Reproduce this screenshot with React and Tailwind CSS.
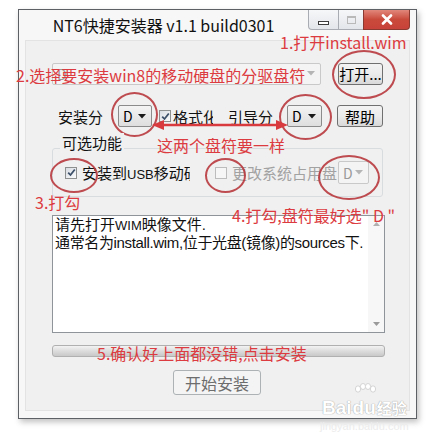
import React from "react";

const Arrow = ({ disabled }) => (
  <svg width="8" height="5" viewBox="0 0 8 5">
    <path d="M0 0 L8 0 L4 4.5 Z" fill={disabled ? "#b5b5b5" : "#1a1a1a"} />
  </svg>
);

const Combo = ({ w, disabled, h = "h-[22px]" }) => (
  <div
    className={`${w} ${h} flex items-center justify-between pl-[4px] pr-[5px] rounded-[2px] border ${
      disabled
        ? "border-[#c9c9c9] bg-[#f4f4f4] text-[#9a9a9a]"
        : "border-[#8b8b8b] bg-linear-to-b from-[#f4f4f4] to-[#dedede] text-black"
    } text-[14px] leading-none`}
  >
    <span>D</span>
    <Arrow disabled={disabled} />
  </div>
);

const Check = ({ checked, disabled }) => (
  <span
    className={`w-[12px] h-[12px] shrink-0 flex items-center justify-center border ${
      disabled ? "border-[#bcbcbc] bg-[#f6f6f6]" : "border-[#8e8f8f] bg-linear-to-br from-[#d8dce2] to-[#fbfbfb]"
    }`}
  >
    {checked && (
      <svg width="9" height="9" viewBox="0 0 9 9">
        <path d="M1.2 4.6 L3.5 7 L7.8 1.5" stroke="#3d5069" strokeWidth="1.8" fill="none" />
      </svg>
    )}
  </span>
);

const Btn = ({ children, className = "", gray }) => (
  <div
    className={`flex items-center justify-center rounded-[3px] border ${
      gray ? "border-[#adb2b5] bg-[#f4f4f4] text-[#6d6d6d]" : "border-[#707070] bg-linear-to-b from-[#f3f3f3] via-[#ebebeb] to-[#d9d9d9] text-black"
    } text-[15px] leading-none ${className}`}
  >
    {children}
  </div>
);

const Ellipse = ({ className }) => (
  <div className={`absolute rounded-[50%] border-2 border-[#b8393d] opacity-90 ${className}`} />
);

const Note = ({ className, children }) => (
  <div className={`absolute text-[16px] leading-[16px] text-[#dc3b40] whitespace-nowrap ${className}`}>{children}</div>
);

export default function App() {
  return (
    <div className="relative w-[438px] h-[441px] bg-white overflow-hidden pl-[18px] pt-[9px] font-['Noto_Sans_CJK_SC','Noto_Sans',sans-serif]">
      {/* window */}
      <div className="w-[399px] h-[410px] border border-[#5d6166] bg-[#f7f7f8] flex flex-col shadow-[2px_3px_6px_rgba(0,0,0,0.25)]">
        {/* title bar */}
        <div className="h-[30px] flex">
          <div className="flex-1 text-center text-[16px] leading-[30px] text-[#111]">NT6快捷安装器 v1.1 build0301</div>
          <div className="flex items-start mr-[6px]">
            <div className="w-[31px] h-[20px] border border-t-0 border-[#a9acb2] rounded-bl-[4px] bg-linear-to-b from-[#f6f7f9] to-[#e3e6ea] flex items-center justify-center">
              <span className="w-[11px] h-[4px] border border-[#3c3c3c] bg-white mt-[6px]" />
            </div>
            <div className="w-[24px] h-[20px] border-b border-[#a9acb2] bg-linear-to-b from-[#f6f7f9] to-[#e3e6ea] flex items-center justify-center">
              <span className="w-[9px] h-[8px] border border-[#b9b9b9] border-t-2" />
            </div>
            <div className="w-[47px] h-[20px] border border-t-0 border-[#8a3a30] rounded-br-[4px] bg-linear-to-b from-[#e0877b] via-[#c9493b] to-[#c8433a] flex items-center justify-center">
              <svg width="12" height="11" viewBox="0 0 12 11">
                <path d="M2 1.5 L10 9.5 M10 1.5 L2 9.5" stroke="#fff" strokeWidth="2.6" strokeLinecap="round" />
              </svg>
            </div>
          </div>
        </div>

        {/* client area */}
        <div className="mx-[6px] mb-[7px] flex-1 bg-[#f0f0f0] border border-[#e3e3e3] pl-[26px] pt-[21px] flex flex-col text-[15px] text-[#111]">
          <div className="flex items-center h-[23px]">
            <Combo w="w-[269px]" disabled />
            <Btn className="ml-[17px] w-[45px] h-[22px]">打开...</Btn>
          </div>

          <div className="flex items-center h-[22px] mt-[20px]">
            <span className="ml-[6px] w-[60px] leading-none">安装分</span>
            <Combo w="w-[34px]" />
            <span className="ml-[7px]"><Check checked /></span>
            <span className="ml-[2px] w-[40px] overflow-hidden whitespace-nowrap leading-none">格式化</span>
            <span className="ml-[15px] w-[59px] leading-none">引导分</span>
            <Combo w="w-[35px]" />
            <Btn className="ml-[15px] w-[46px] h-[22px]">帮助</Btn>
          </div>

          <div className="mt-[6px] ml-[8px] px-[2px] w-fit leading-[20px] bg-[#f0f0f0] relative z-10">可选功能</div>
          <div className="mt-[-5px] w-[331px] h-[49px] border border-[#d9dcdf] rounded-[3px] flex items-center pl-[12px]">
            <Check checked />
            <span className="ml-[5px] w-[108px] overflow-hidden whitespace-nowrap leading-none">安装到<span className="font-['Liberation_Sans',sans-serif] text-[13px]">USB</span>移动硬盘</span>
            <span className="ml-[25px]"><Check disabled /></span>
            <span className="ml-[5px] w-[106px] whitespace-nowrap leading-none text-[#a2a2a2]">更改系统占用盘</span>
            <Combo w="w-[31px]" h="h-[23px]" disabled />
          </div>

          <div className="mt-[18px] w-[333px] h-[118px] border border-[#8f949b] bg-white flex">
            <div className="flex-1 pl-[2px] text-[15px] leading-[17px] text-[#111] whitespace-nowrap font-['Liberation_Sans','Noto_Sans_CJK_SC',sans-serif]">
              <div>请先打开<span className="text-[13px]">WIM</span>映像文件.</div>
              <div className="tracking-[-0.35px]">通常名为install.wim,位于光盘(镜像)的sources下.</div>
            </div>
            <div className="w-[16px] bg-[#f7f7f7] flex flex-col items-center justify-between py-[6px]">
              <svg width="7" height="4" viewBox="0 0 7 4"><path d="M0 4 L3.5 0 L7 4 Z" fill="#b0b0b0" /></svg>
              <svg width="7" height="4" viewBox="0 0 7 4"><path d="M0 0 L3.5 4 L7 0 Z" fill="#9a9a9a" /></svg>
            </div>
          </div>

          <div className="mt-[12px] w-[333px] h-[12px] rounded-[3px] border border-[#b0b0b0] bg-linear-to-b from-[#f3f3f3] via-[#dcdcdc] to-[#c9c9c9]" />

          <Btn gray className="mt-[13px] ml-[121px] w-[88px] h-[25px] text-[16px]">开始安装</Btn>
        </div>
      </div>

      {/* annotations */}
      <Note className="left-[280px] top-[34px]">1.打开install.wim</Note>
      <Note className="left-[16px] top-[67px]">2.选择要安装win8的移动硬盘的分驱盘符</Note>
      <Note className="left-[157px] top-[137px]">这两个盘符要一样</Note>
      <Note className="left-[35px] top-[194px]">3.打勾</Note>
      <Note className="left-[232px] top-[207px]">4.打勾,盘符最好选" D "</Note>
      <Note className="left-[97px] top-[345px]">5.确认好上面都没错,点击安装</Note>

      <Ellipse className="left-[332px] top-[50px] w-[64px] h-[49px]" />
      <Ellipse className="left-[111px] top-[92px] w-[47px] h-[45px]" />
      <Ellipse className="left-[279px] top-[94px] w-[53px] h-[46px]" />
      <Ellipse className="left-[50px] top-[158px] w-[48px] h-[35px]" />
      <Ellipse className="left-[205px] top-[158px] w-[41px] h-[35px]" />
      <Ellipse className="left-[318px] top-[155px] w-[62px] h-[45px]" />

      <svg className="absolute left-[150px] top-[118px]" width="140" height="14" viewBox="0 0 140 14">
        <path d="M12 7 L128 7" stroke="#d93a3e" strokeWidth="2.5" />
        <path d="M2 7 L14 2 L14 12 Z" fill="#d93a3e" />
        <path d="M138 7 L126 2 L126 12 Z" fill="#d93a3e" />
      </svg>

      {/* watermark */}
      <svg className="absolute left-[352px] top-[383px]" width="26" height="18" viewBox="0 0 26 18">
        <g fill="#fff" stroke="#d4d4d4" strokeWidth="1">
          <ellipse cx="6" cy="6" rx="2.6" ry="3.2" />
          <ellipse cx="11" cy="3.5" rx="2.6" ry="3" />
          <ellipse cx="16" cy="3.5" rx="2.6" ry="3" />
          <ellipse cx="21" cy="6" rx="2.6" ry="3.2" />
        </g>
      </svg>
      <div className="absolute left-[322px] top-[398px] text-[19px] leading-[20px] font-bold text-white whitespace-nowrap font-['Liberation_Sans',sans-serif] [text-shadow:0_0_1px_#a8a8a8,0_0_1px_#a8a8a8]">
        Bai<span className="px-[1px]">du</span><span className="text-[15px] font-['Noto_Sans_CJK_SC',sans-serif]">经验</span>
      </div>
      <div className="absolute left-[320px] top-[420px] text-[11px] leading-[12px] text-[#ececec] whitespace-nowrap font-['Liberation_Sans',sans-serif]">
        jingyan.baidu.com
      </div>
    </div>
  );
}
